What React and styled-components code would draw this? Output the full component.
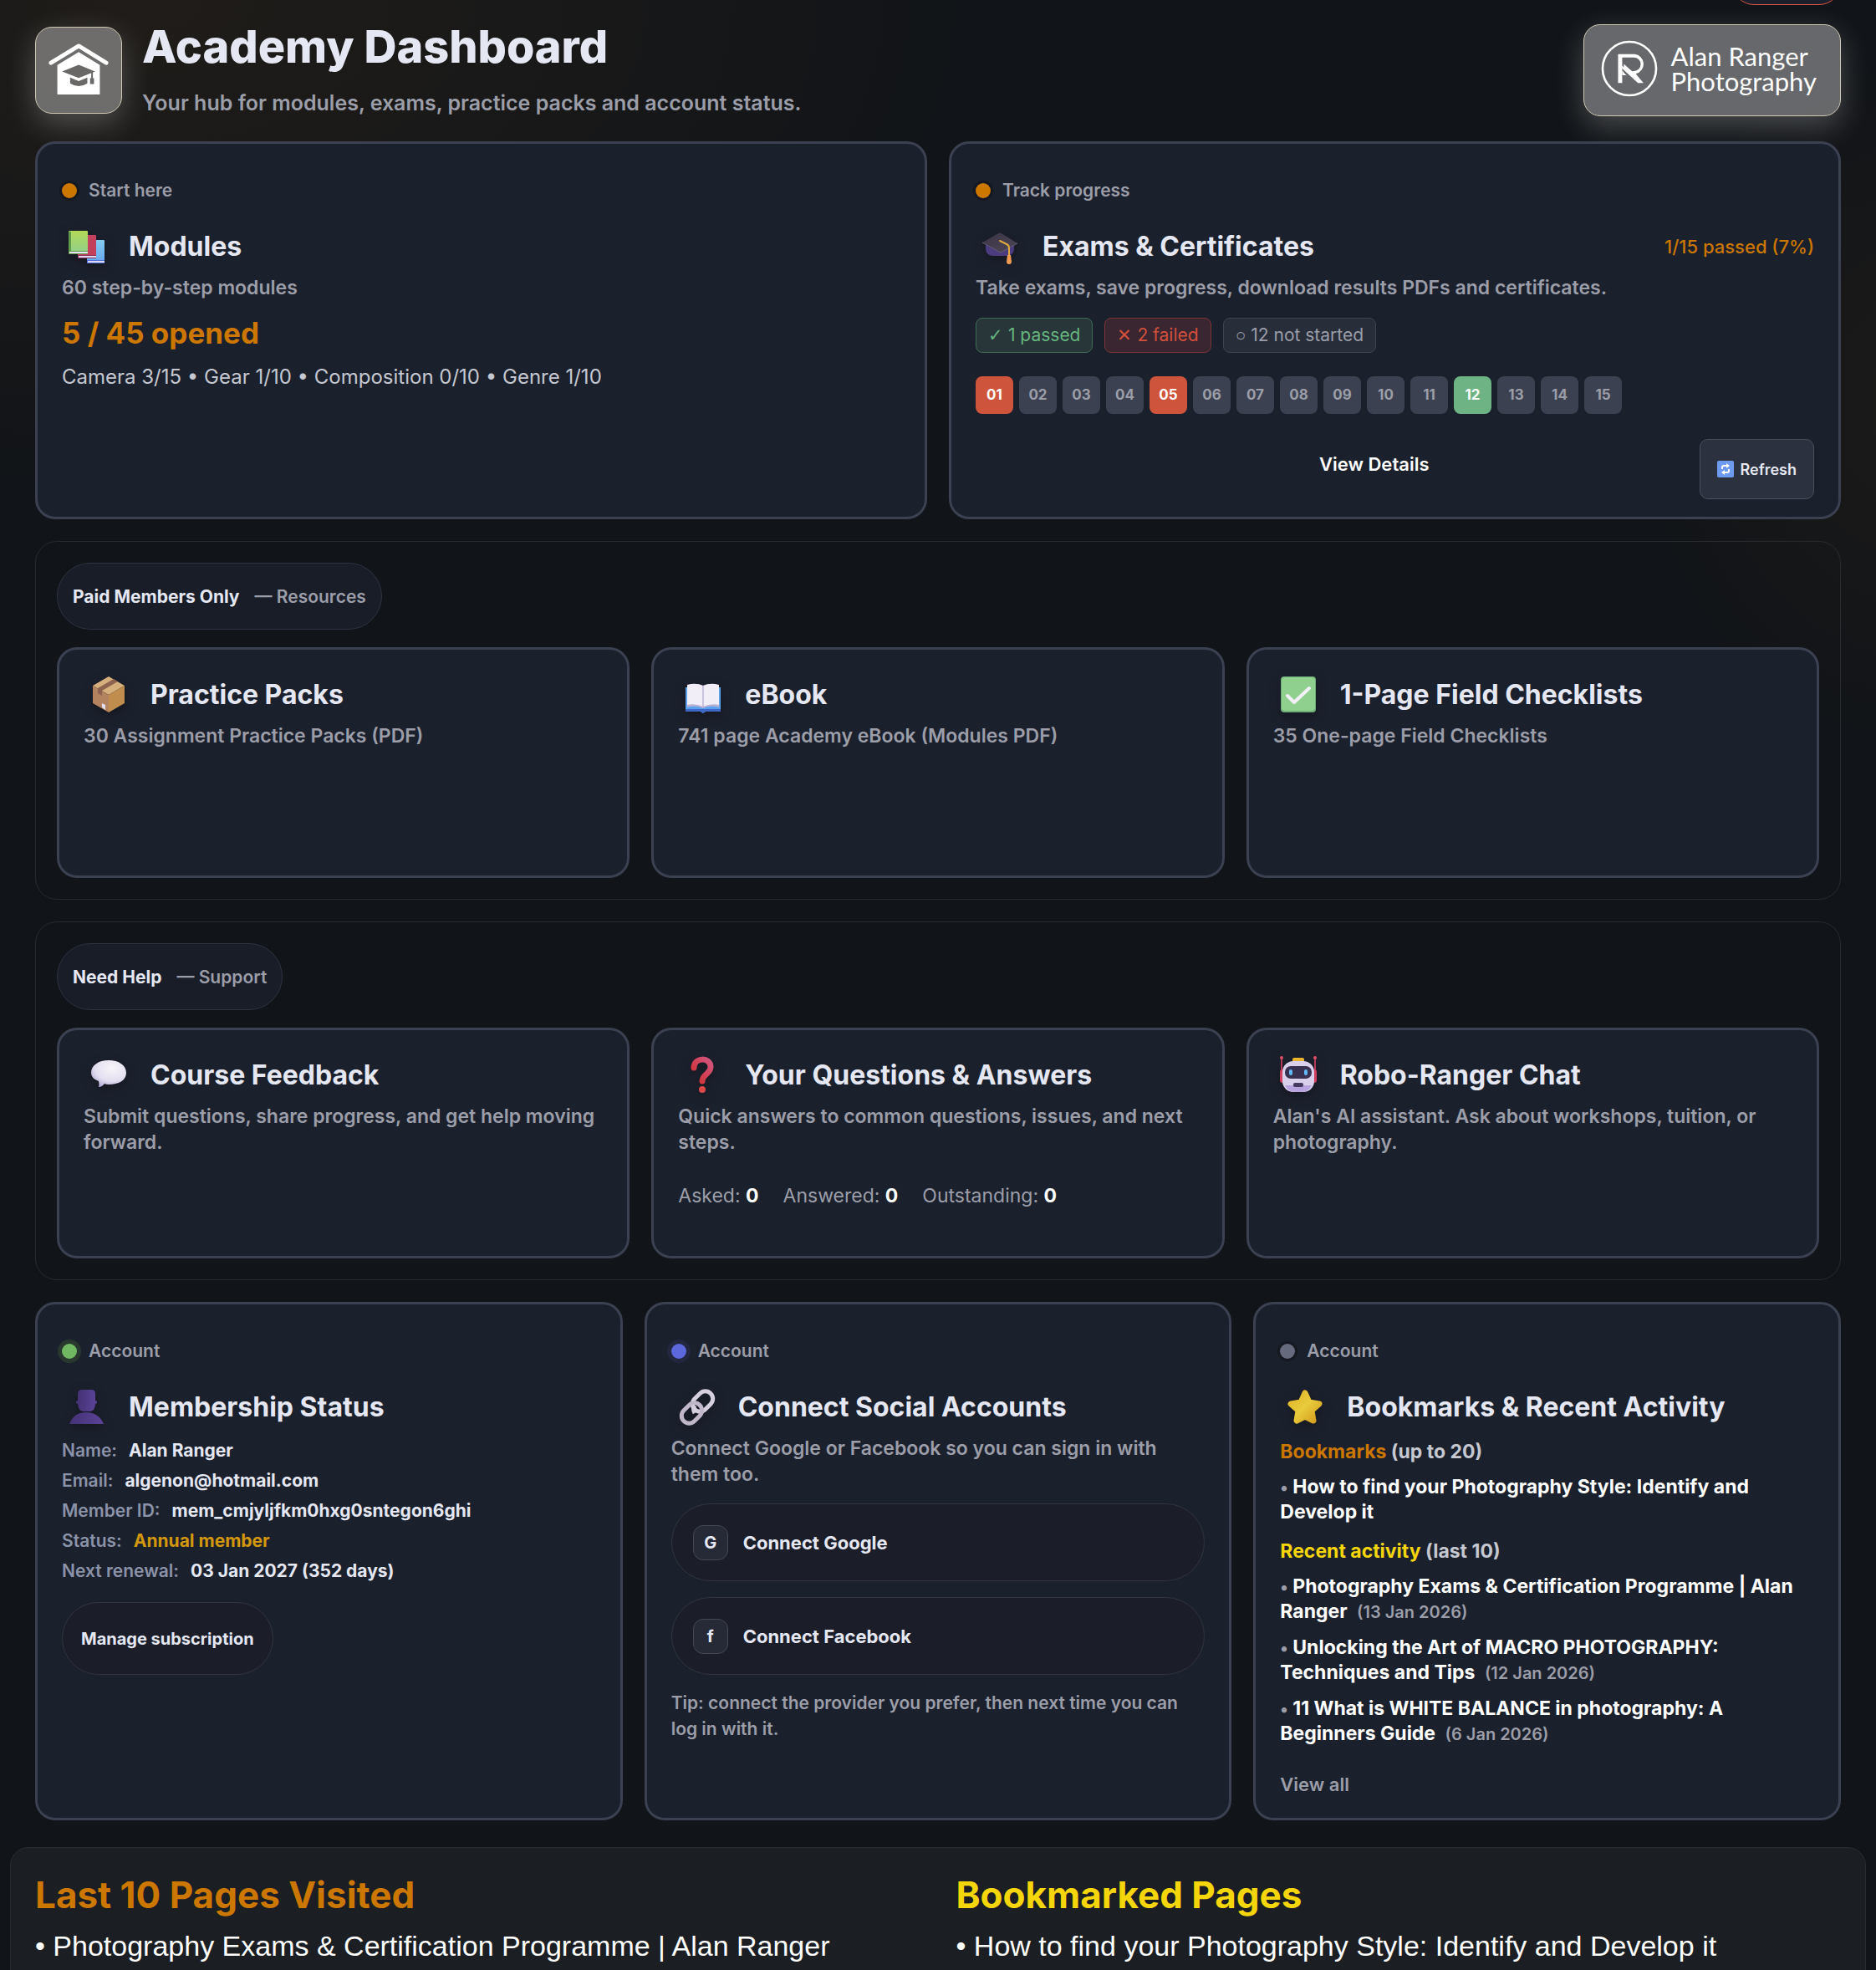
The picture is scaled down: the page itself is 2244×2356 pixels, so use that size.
import React from 'react';
import styled, { createGlobalStyle } from 'styled-components';

const GlobalStyle = createGlobalStyle`
  *, *::before, *::after {
    box-sizing: border-box;
  }

  body {
    margin: 0;
    background: #111418;
  }

  h1, h2, h3, p, ul, dl, dd {
    margin: 0;
    padding: 0;
  }

  button {
    font-family: inherit;
    cursor: pointer;
  }
`;

const Page = styled.div`
  position: relative;
  display: flex;
  flex-direction: column;
  height: 100vh;
  overflow-y: auto;
  scrollbar-width: none;
  padding: 24px 12px;
  font-family: Inter, 'Liberation Sans', sans-serif;
  color: #e5e8f2;
  background:
    radial-gradient(ellipse 1000px 600px at 8% 0%, rgba(224, 140, 40, 0.07), transparent),
    radial-gradient(ellipse 340px 420px at 102% 480px, rgba(224, 140, 40, 0.05), transparent),
    #111418;
`;

const Main = styled.main`
  display: flex;
  flex-direction: column;
  flex-shrink: 0;
  gap: 26px;
  padding: 0 30px;
`;

/* Header */

const Header = styled.header`
  display: flex;
  align-items: flex-end;
  gap: 24px;
  margin-bottom: 4px;
`;

const CutPill = styled.div`
  position: absolute;
  top: -46px;
  right: 42px;
  width: 130px;
  height: 52px;
  border: 1px solid #d8553f;
  border-radius: 26px;
  background: #1b1f2c;
`;

const GlassBox = styled.div`
  display: flex;
  align-items: center;
  border: 1px solid #cfc9b4;
  border-radius: 20px;
  background: rgba(255, 255, 255, 0.36);
  box-shadow: 0 12px 36px rgba(255, 255, 255, 0.24);
`;

const HomeBadge = styled(GlassBox)`
  justify-content: center;
  width: 104px;
  height: 104px;
  margin-bottom: 3px;
`;

const Brand = styled(GlassBox)`
  gap: 16px;
  height: 110px;
  margin-left: auto;
  padding: 0 28px 4px 20px;
  font-family: Lato, sans-serif;
  font-size: 31px;
  line-height: 30px;
  color: #fff;
`;

const Title = styled.h1`
  margin-bottom: 20px;
  font-size: 54px;
  font-weight: 800;
  line-height: 64px;
`;

const Subtitle = styled.p`
  font-size: 25px;
  font-weight: 600;
  line-height: 31px;
  color: #9b9ea8;
`;

/* Cards */

const Grid = styled.div`
  display: grid;
  grid-template-columns: repeat(${(p) => p.$cols}, minmax(0, 1fr));
  gap: 26px;
`;

const Card = styled.section`
  display: flex;
  flex-direction: column;
  min-height: ${(p) => p.$minHeight}px;
  padding: ${(p) => (p.$compact ? '24px 29px' : '41px 29px 21px')};
  border: 3px solid #3b4151;
  border-radius: 24px;
  background: #1b202d;
`;

const Label = styled.p`
  display: flex;
  align-items: center;
  gap: 14px;
  margin-bottom: 22px;
  font-size: 21px;
  font-weight: 600;
  line-height: 30px;
  color: #9b9ea8;
`;

const Dot = styled.span`
  width: 18px;
  height: 18px;
  border-radius: 50%;
  background: ${(p) => p.$color};
  box-shadow: 0 0 0 ${(p) => (p.$ring ? '5px' : '3px')} ${(p) => p.$ring || '#151821'};
`;

const HeadRow = styled.div`
  display: flex;
  align-items: center;
  gap: 20px;
  height: 60px;
  margin-bottom: 4px;
`;

const IconSlot = styled.span`
  display: flex;
  align-items: center;
  justify-content: center;
  width: 60px;

  svg {
    width: 48px;
    height: 48px;
    overflow: visible;
    filter: drop-shadow(0 4px 6px rgba(16, 16, 20, 0.6));
  }
`;

const CardTitle = styled.h2`
  font-size: 32px;
  font-weight: 700;
  line-height: 40px;
`;

const Tally = styled.span`
  margin-left: auto;
  font-size: 22px;
  font-weight: 500;
  color: #cb7700;
`;

const Text = styled.p`
  font-size: 23px;
  font-weight: 600;
  line-height: 31px;
  color: #9b9ea8;
`;

const Stat = styled.p`
  margin: 17px 0 16px;
  font-size: 35px;
  font-weight: 700;
  line-height: 42px;
  color: #cb7700;
`;

const Breakdown = styled.p`
  font-size: 24px;
  line-height: 32px;
  color: #c5c8d0;
`;

/* Exams */

const tones = {
  pass: { bg: '#28363a', border: '#3e6b54', text: '#66b57f', solid: '#6db384' },
  fail: { bg: '#3a2630', border: '#7a3436', text: '#d2503b', solid: '#cf543c' },
  idle: { bg: '#282d3a', border: '#40444f', text: '#9b9ea8', solid: '#3b4150' },
};

const PillRow = styled.div`
  display: flex;
  gap: 14px;
  margin: 20px 0 28px;
`;

const Pill = styled.span`
  height: 42px;
  padding: 0 14px;
  border: 1px solid ${(p) => tones[p.$tone].border};
  border-radius: 8px;
  background: ${(p) => tones[p.$tone].bg};
  font-size: 21px;
  line-height: 40px;
  color: ${(p) => tones[p.$tone].text};
`;

const Mark = styled.span`
  font-family: 'Liberation Sans', sans-serif;
`;

const TileRow = styled.div`
  display: flex;
  flex-wrap: wrap;
  gap: 7px;
`;

const Tile = styled.span`
  width: 45px;
  border-radius: 8px;
  background: ${(p) => tones[p.$tone].solid};
  font-size: 17px;
  font-weight: 700;
  line-height: 45px;
  text-align: center;
  color: ${(p) => (p.$tone === 'idle' ? '#9b9ea8' : '#fff')};
`;

const Actions = styled.div`
  display: flex;
  gap: 12px;
  margin-top: 30px;
`;

const ViewDetails = styled.button`
  flex: 1;
  padding: 0 0 12px 100px;
  border: 0;
  background: none;
  font-size: 22px;
  font-weight: 600;
  color: #fff;
`;

const Refresh = styled.button`
  display: flex;
  align-items: center;
  gap: 8px;
  height: 72px;
  padding: 0 20px;
  border: 1px solid #4a4f5d;
  border-radius: 10px;
  background: #2c313f;
  font-size: 18px;
  font-weight: 600;
  color: #e5e8f2;
`;

/* Grouped sections */

const Group = styled.section`
  padding: 25px;
  border: 1px solid #272b2f;
  border-radius: 26px;
`;

const GroupTag = styled.div`
  display: inline-flex;
  align-items: center;
  gap: 18px;
  height: 80px;
  margin-bottom: 21px;
  padding: 0 18px;
  border: 1px solid #2e3342;
  border-radius: 40px;
  background: #191d28;
  font-size: 21px;
  font-weight: 600;
  color: #9b9ea8;

  strong {
    font-weight: 700;
    color: #e5e8f2;
  }
`;

const Counters = styled.p`
  display: flex;
  gap: 29px;
  margin-top: 32px;
  font-size: 23px;
  line-height: 32px;
  color: #9b9ea8;

  strong {
    color: #fff;
  }
`;

/* Account cards */

const Details = styled.dl`
  margin-bottom: 19px;
  font-size: 21px;
  font-weight: 600;
  line-height: 36px;

  div {
    display: flex;
    gap: 14px;
  }

  dt {
    color: #8b93a8;
  }
`;

const DetailValue = styled.dd`
  font-weight: 700;
  color: ${(p) => (p.$gold ? '#d3980c' : '#e5e8f2')};
`;

const RoundButton = styled.button`
  display: flex;
  align-items: center;
  border: 1px solid #313441;
  border-radius: 48px;
  background: #1b1d29;
  font-size: 22px;
  font-weight: 700;
  color: #e5e8f2;
`;

const ManageButton = styled(RoundButton)`
  align-self: flex-start;
  height: 87px;
  padding: 0 22px;
  font-size: 20px;
`;

const ConnectButton = styled(RoundButton)`
  gap: 18px;
  height: 93px;
  margin-top: 19px;
  padding: 0 25px;
`;

const Letter = styled.span`
  width: 42px;
  border: 1px solid #444854;
  border-radius: 12px;
  background: #262a36;
  font-size: 20px;
  line-height: 40px;
  text-align: center;
`;

const Tip = styled(Text)`
  margin-top: 18px;
  font-size: 21px;
`;

const ListTitle = styled.h3`
  margin: 4px 0 12px;
  font-size: 23px;
  font-weight: 700;
  line-height: 30px;
  color: #c5c8d0;

  b {
    font-weight: 700;
    color: ${(p) => p.$color};
  }
`;

const LinkList = styled.ul`
  display: flex;
  flex-direction: column;
  gap: 13px;
  margin-bottom: 13px;
  list-style: none;
  font-size: 23px;
  font-weight: 700;
  line-height: 30px;
  color: #9b9ea8;

  a {
    color: #fff;
    text-decoration: none;
  }
`;

const Bullet = styled.span`
  font-size: 20px;
  line-height: 20px;
`;

const When = styled.span`
  margin-left: 6px;
  font-size: 20px;
  font-weight: 600;
  line-height: 20px;
`;

const ViewAll = styled.a`
  margin-top: 18px;
  font-size: 22px;
  font-weight: 600;
  line-height: 30px;
  color: #9b9ea8;
  text-decoration: none;
`;

/* Footer panel */

const History = styled.section`
  display: grid;
  grid-template-columns: 1fr 1fr;
  flex-shrink: 0;
  gap: 43px;
  margin-top: 32px;
  padding: 30px 29px;
  border: 1px solid #292c31;
  border-radius: 22px;
  background: #1b1e22;
`;

const HistoryTitle = styled.h2`
  margin-bottom: 13px;
  font-size: 44px;
  font-weight: 700;
  line-height: 52px;
  color: ${(p) => p.$color};
`;

const HistoryItem = styled.a`
  font-family: 'Liberation Sans', Arial, sans-serif;
  font-size: 34px;
  line-height: 44px;
  color: #fff;
  text-decoration: none;
`;

/* Icons */

const HomeIcon = () => (
  <svg width="102" height="102" viewBox="37 40 307 307">
    <path d="M91 167 191 106l99 61" fill="none" stroke="#fff" strokeWidth="15" strokeLinecap="round" strokeLinejoin="round" />
    <path d="M114 175 191 128l76 47v106H114z" fill="#fff" />
    <path d="M131 198l60-24 59 24-59 23zM160 220l31 13 31-13v21q-31 20-62 0zM236 200h6v22h4v21h-14v-21h4z" fill="#6a6866" />
  </svg>
);

const BrandMark = () => (
  <svg width="68" height="68" viewBox="105 142 206 206" fill="#fff">
    <circle cx="208" cy="245" r="97" fill="none" stroke="#fff" strokeWidth="8" />
    <path d="M167 193h60a36 36 0 0 1 4 71l28 33h-20l-57-52v52h-15z" />
    <path d="M182 205h42a24 24 0 0 1 1 49l-7 1-30-27v12l-6-5z" fill="#656669" />
    <path d="M182 252l18 18h-18z" />
    <path d="M182 271l18-1-12-12" fill="none" stroke="#656669" strokeWidth="3" />
  </svg>
);

const BooksIcon = () => (
  <svg viewBox="0 0 48 48">
    <defs>
      <linearGradient id="bookGreen" x1="0" y1="0" x2="0" y2="1">
        <stop offset="0" stopColor="#b3d957" />
        <stop offset="1" stopColor="#8fcf8c" />
      </linearGradient>
      <linearGradient id="bookBlue" x1="0" y1="0" x2="0" y2="1">
        <stop offset="0" stopColor="#86cdf0" />
        <stop offset="1" stopColor="#62a5f0" />
      </linearGradient>
    </defs>
    <rect x="24" y="16" width="21" height="28" rx="1" fill="url(#bookBlue)" />
    <path d="M24 40h21v4H24z" fill="#4b6fd6" />
    <path d="M25 41h20v2H25z" fill="#ded8f2" />
    <rect x="13" y="10" width="22" height="28" rx="1" fill="#c2405c" />
    <path d="M13 34h22v4H13z" fill="#8d2c55" />
    <path d="M14 35h21v2H14z" fill="#ded8f2" />
    <rect x="2" y="5" width="23" height="28" rx="1" fill="url(#bookGreen)" />
    <path d="M2 6h3v26H2zM2 29h23v4H2z" fill="#5f9a4c" />
    <path d="M3 30h22v2H3z" fill="#e6e2f2" />
  </svg>
);

const CapIcon = () => (
  <svg viewBox="0 0 48 48">
    <defs>
      <linearGradient id="capBoard" x1="0" y1="0" x2="1" y2="1">
        <stop offset="0" stopColor="#3b3445" />
        <stop offset="1" stopColor="#4b4655" />
      </linearGradient>
    </defs>
    <path d="M6 21v6q1 8 9 8h16q8 0 9-8v-6z" fill="#4a3c7e" />
    <path d="M2 19 23 7l21 13-20 11z" fill="url(#capBoard)" />
    <path d="M2 19l22 12 20-11" fill="none" stroke="#625c70" strokeWidth="1" />
    <path d="M23 17l8 4q3 1 3 5v9" fill="none" stroke="#dfa93c" strokeWidth="2" strokeLinecap="round" />
    <path d="M32 34h4l1 8q0 3-3 3t-3-3z" fill="#ef9a52" />
  </svg>
);

const BoxIcon = () => (
  <svg viewBox="0 0 48 48">
    <path d="M24 2l19 11-19 11L5 13z" fill="#d6af7c" />
    <path d="M5 13l19 11v21L5 34z" fill="#b3825f" />
    <path d="M43 13 24 24v21l19-11z" fill="#c08d4f" />
    <path d="M30 5l5 3-19 11v6l-5-3v-6z" fill="#8d6350" />
    <path d="M16 34l4 2v6l-4-3z" fill="#e3dcf0" />
  </svg>
);

const BookIcon = () => (
  <svg viewBox="0 0 48 48">
    <path d="M3 15h42v29H27l-3 2-3-2H3z" fill="#5aa2ee" />
    <path d="M3 41h42v3H27l-3 2-3-2H3z" fill="#3f68c9" />
    <path d="M5 13q10-4 19 0 9-4 19 0v26q-10-3-19 1-9-4-19-1z" fill="#b8b1d6" />
    <path d="M5 12q10-3 19 1 9-4 19-1v24q-10-2-19 2-9-4-19-2z" fill="#f1eef8" />
    <path d="M24 13v25" stroke="#c9c2dd" strokeWidth="2" />
  </svg>
);

const CheckIcon = () => (
  <svg viewBox="0 0 48 48">
    <rect x="3" y="2" width="42" height="43" rx="4" fill="#6fae77" />
    <rect x="4" y="3" width="40" height="40" rx="4" fill="#8fd08f" />
    <path d="M11 25l8 8 18-17" fill="none" stroke="#f3f0fa" strokeWidth="4" strokeLinecap="round" strokeLinejoin="round" />
  </svg>
);

const SpeechIcon = () => (
  <svg viewBox="0 0 48 48">
    <defs>
      <radialGradient id="speech" cx="0.6" cy="0.3" r="0.8">
        <stop offset="0" stopColor="#f7f5fa" />
        <stop offset="0.6" stopColor="#e4dff0" />
        <stop offset="1" stopColor="#aaa0d0" />
      </radialGradient>
    </defs>
    <path d="M24 6c12 0 21 6 21 15s-9 14-21 14q-3 0-5-1-3 4-7 4 1-3 0-7-9-3-9-10C3 12 12 6 24 6z" fill="url(#speech)" />
  </svg>
);

const QuestionIcon = () => (
  <svg viewBox="0 0 48 48">
    <defs>
      <linearGradient id="question" x1="0" y1="1" x2="1" y2="0">
        <stop offset="0" stopColor="#d02f2f" />
        <stop offset="1" stopColor="#d2557f" />
      </linearGradient>
    </defs>
    <path d="M13 15C13 2 33 2 33 14c0 8-10 9-10 17" fill="none" stroke="url(#question)" strokeWidth="7" strokeLinecap="round" />
    <circle cx="23" cy="41" r="4" fill="#dc4a48" />
  </svg>
);

const RobotIcon = () => (
  <svg viewBox="0 0 48 48">
    <path d="M4 4v16M44 4v16" stroke="#b43a58" strokeWidth="2" />
    <circle cx="4" cy="3" r="2" fill="#e0506a" />
    <circle cx="44" cy="3" r="2" fill="#e0506a" />
    <rect x="2" y="17" width="6" height="16" rx="3" fill="#d13f60" />
    <rect x="40" y="17" width="6" height="16" rx="3" fill="#d13f60" />
    <rect x="17" y="3" width="14" height="8" rx="2" fill="#eab52c" />
    <rect x="5" y="7" width="38" height="37" rx="13" fill="#d9d0ec" />
    <path d="M8 36h32q-4 8-12 8h-8q-8 0-12-8z" fill="#b8a5e0" />
    <rect x="8" y="13" width="32" height="15" rx="7" fill="#38304f" />
    <rect x="13" y="17" width="4" height="7" rx="2" fill="#62b8f5" />
    <rect x="31" y="17" width="4" height="7" rx="2" fill="#62b8f5" />
    <rect x="18" y="33" width="12" height="5" rx="2" fill="#453b60" />
  </svg>
);

const PersonIcon = () => (
  <svg viewBox="0 0 48 48">
    <defs>
      <linearGradient id="person" x1="0" y1="0" x2="1" y2="0">
        <stop offset="0" stopColor="#443275" />
        <stop offset="1" stopColor="#5a4396" />
      </linearGradient>
    </defs>
    <path d="M3 44q5-14 20-14t21 14z" fill="url(#person)" />
    <circle cx="13" cy="18" r="2" fill="#443275" />
    <circle cx="34" cy="18" r="2" fill="#5a4396" />
    <path d="M13 8q0-5 5-5h11q5 0 5 5v10q0 11-6 11h-9q-6 0-6-11z" fill="url(#person)" />
  </svg>
);

const LinkIcon = () => (
  <svg viewBox="0 0 48 48" fill="none" strokeWidth="5">
    <rect x="18" y="8" width="27" height="18" rx="9" transform="rotate(-45 31.500 17)" stroke="#d6cfdf" />
    <rect x="5" y="22" width="27" height="18" rx="9" transform="rotate(-45 18.500 31)" stroke="#c0b7cb" />
    <path d="M22 22a9 9 0 0 0 0 9" stroke="#d6cfdf" />
  </svg>
);

const StarIcon = () => (
  <svg viewBox="0 0 48 48">
    <defs>
      <linearGradient id="star" x1="0" y1="0" x2="1" y2="1">
        <stop offset="0" stopColor="#e2b52a" />
        <stop offset="0.5" stopColor="#e8cb3c" />
        <stop offset="1" stopColor="#d49c1e" />
      </linearGradient>
    </defs>
    <path
      d="M24 7l5 11 12 2-9 8 2 12-10-5-10 5 2-12-9-8 12-2z"
      fill="url(#star)"
      stroke="url(#star)"
      strokeWidth="7"
      strokeLinejoin="round"
    />
  </svg>
);

const RefreshIcon = () => (
  <svg width="20" height="20" viewBox="0 0 20 20">
    <rect width="20" height="20" rx="2" fill="#6d9bf0" />
    <path d="M6 10V8q0-2 2-2h4M14 10v2q0 2-2 2H8" fill="none" stroke="#fff" strokeWidth="2" />
    <path d="M11 3l4 3-4 3zM9 11l-4 3 4 3z" fill="#fff" />
  </svg>
);

function CardHead({ icon, title, children }) {
  return (
    <HeadRow>
      <IconSlot>{icon}</IconSlot>
      <CardTitle>{title}</CardTitle>
      {children}
    </HeadRow>
  );
}

const exams = Array.from({ length: 15 }, (_, i) => String(i + 1).padStart(2, '0'));
const examTone = { '01': 'fail', '05': 'fail', 12: 'pass' };

const resources = [
  { icon: <BoxIcon />, title: 'Practice Packs', text: '30 Assignment Practice Packs (PDF)' },
  { icon: <BookIcon />, title: 'eBook', text: '741 page Academy eBook (Modules PDF)' },
  { icon: <CheckIcon />, title: '1-Page Field Checklists', text: '35 One-page Field Checklists' },
];

const member = [
  ['Name:', 'Alan Ranger'],
  ['Email:', 'algenon@hotmail.com'],
  ['Member ID:', 'mem_cmjyljfkm0hxg0sntegon6ghi'],
  ['Status:', 'Annual member'],
  ['Next renewal:', '03 Jan 2027 (352 days)'],
];

const activity = [
  ['Photography Exams & Certification Programme | Alan Ranger', '(13 Jan 2026)'],
  ['Unlocking the Art of MACRO PHOTOGRAPHY: Techniques and Tips', '(12 Jan 2026)'],
  ['11 What is WHITE BALANCE in photography: A Beginners Guide', '(6 Jan 2026)'],
];

function App() {
  return (
    <Page>
      <GlobalStyle />
      <CutPill />
      <Main>
        <Header>
          <HomeBadge><HomeIcon /></HomeBadge>
          <div>
            <Title>Academy Dashboard</Title>
            <Subtitle>Your hub for modules, exams, practice packs and account status.</Subtitle>
          </div>
          <Brand>
            <BrandMark />
            <span>Alan Ranger<br />Photography</span>
          </Brand>
        </Header>

        <Grid $cols={2}>
          <Card $minHeight={452}>
            <Label><Dot $color="#cb7700" />Start here</Label>
            <CardHead icon={<BooksIcon />} title="Modules" />
            <Text>60 step-by-step modules</Text>
            <Stat>5 / 45 opened</Stat>
            <Breakdown>Camera 3/15 • Gear 1/10 • Composition 0/10 • Genre 1/10</Breakdown>
          </Card>
          <Card $minHeight={452}>
            <Label><Dot $color="#cb7700" />Track progress</Label>
            <CardHead icon={<CapIcon />} title="Exams & Certificates">
              <Tally>1/15 passed (7%)</Tally>
            </CardHead>
            <Text>Take exams, save progress, download results PDFs and certificates.</Text>
            <PillRow>
              <Pill $tone="pass"><Mark>✓</Mark> 1 passed</Pill>
              <Pill $tone="fail"><Mark>✕</Mark> 2 failed</Pill>
              <Pill $tone="idle"><Mark>○</Mark> 12 not started</Pill>
            </PillRow>
            <TileRow>
              {exams.map((n) => (
                <Tile key={n} $tone={examTone[n] || 'idle'}>{n}</Tile>
              ))}
            </TileRow>
            <Actions>
              <ViewDetails>View Details</ViewDetails>
              <Refresh><RefreshIcon />Refresh</Refresh>
            </Actions>
          </Card>
        </Grid>

        <Group>
          <GroupTag><strong>Paid Members Only</strong><span>— Resources</span></GroupTag>
          <Grid $cols={3}>
            {resources.map((r) => (
              <Card key={r.title} $compact $minHeight={276}>
                <CardHead icon={r.icon} title={r.title} />
                <Text>{r.text}</Text>
              </Card>
            ))}
          </Grid>
        </Group>

        <Group>
          <GroupTag><strong>Need Help</strong><span>— Support</span></GroupTag>
          <Grid $cols={3}>
            <Card $compact $minHeight={276}>
              <CardHead icon={<SpeechIcon />} title="Course Feedback" />
              <Text>Submit questions, share progress, and get help moving forward.</Text>
            </Card>
            <Card $compact $minHeight={276}>
              <CardHead icon={<QuestionIcon />} title="Your Questions & Answers" />
              <Text>Quick answers to common questions, issues, and next steps.</Text>
              <Counters>
                <span>Asked: <strong>0</strong></span>
                <span>Answered: <strong>0</strong></span>
                <span>Outstanding: <strong>0</strong></span>
              </Counters>
            </Card>
            <Card $compact $minHeight={276}>
              <CardHead icon={<RobotIcon />} title="Robo-Ranger Chat" />
              <Text>Alan's AI assistant. Ask about workshops, tuition, or photography.</Text>
            </Card>
          </Grid>
        </Group>

        <Grid $cols={3}>
          <Card $minHeight={620}>
            <Label><Dot $color="#70b862" $ring="#29382f" />Account</Label>
            <CardHead icon={<PersonIcon />} title="Membership Status" />
            <Details>
              {member.map(([name, value]) => (
                <div key={name}>
                  <dt>{name}</dt>
                  <DetailValue $gold={name === 'Status:'}>{value}</DetailValue>
                </div>
              ))}
            </Details>
            <ManageButton>Manage subscription</ManageButton>
          </Card>
          <Card $minHeight={620}>
            <Label><Dot $color="#5d68dc" $ring="#22263f" />Account</Label>
            <CardHead icon={<LinkIcon />} title="Connect Social Accounts" />
            <Text>Connect Google or Facebook so you can sign in with them too.</Text>
            <ConnectButton><Letter>G</Letter>Connect Google</ConnectButton>
            <ConnectButton><Letter>f</Letter>Connect Facebook</ConnectButton>
            <Tip>Tip: connect the provider you prefer, then next time you can log in with it.</Tip>
          </Card>
          <Card $minHeight={620}>
            <Label><Dot $color="#666a7d" />Account</Label>
            <CardHead icon={<StarIcon />} title="Bookmarks & Recent Activity" />
            <ListTitle $color="#cb7700"><b>Bookmarks</b> (up to 20)</ListTitle>
            <LinkList>
              <li><Bullet>•</Bullet> <a href="#style">How to find your Photography Style: Identify and Develop it</a></li>
            </LinkList>
            <ListTitle $color="#f5d60a"><b>Recent activity</b> (last 10)</ListTitle>
            <LinkList>
              {activity.map(([name, date]) => (
                <li key={name}><Bullet>•</Bullet> <a href="#activity">{name}</a> <When>{date}</When></li>
              ))}
            </LinkList>
            <ViewAll href="#all">View all</ViewAll>
          </Card>
        </Grid>
      </Main>

      <History>
        <div>
          <HistoryTitle $color="#cb7700">Last 10 Pages Visited</HistoryTitle>
          <HistoryItem href="#exams">• Photography Exams & Certification Programme | Alan Ranger</HistoryItem>
        </div>
        <div>
          <HistoryTitle $color="#f5d60a">Bookmarked Pages</HistoryTitle>
          <HistoryItem href="#style">• How to find your Photography Style: Identify and Develop it</HistoryItem>
        </div>
      </History>
    </Page>
  );
}

export default App;
